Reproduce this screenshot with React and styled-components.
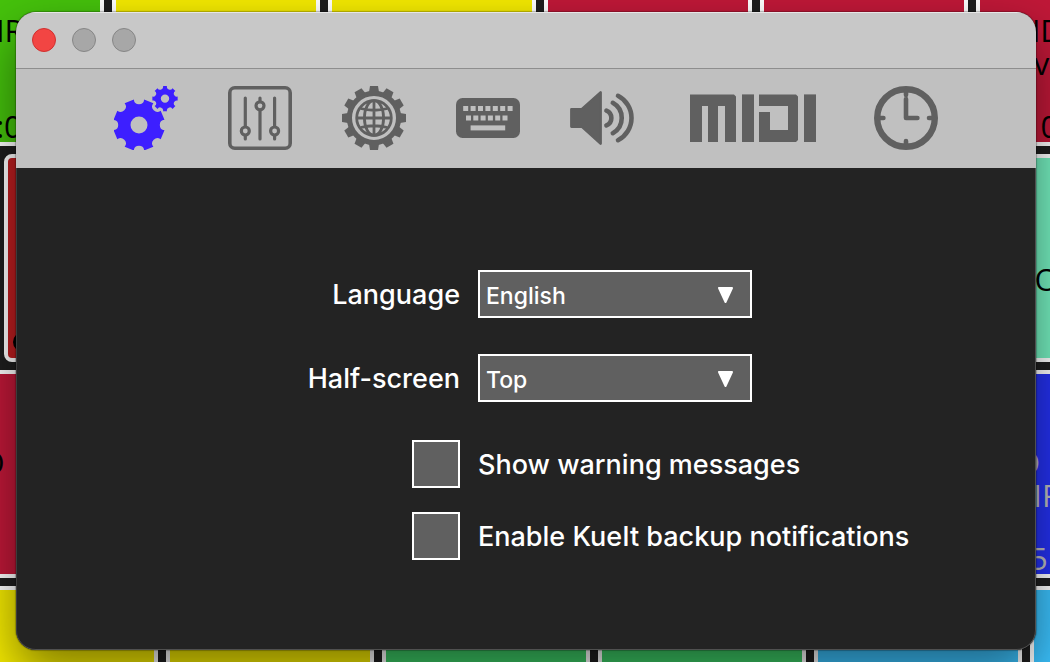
import React, { useState } from "react";
import styled, { createGlobalStyle } from "styled-components";

const GlobalStyle = createGlobalStyle`
  * {
    box-sizing: border-box;
  }
  body {
    margin: 0;
    background-color: #1e1e1e;
    font-family: Inter, "Liberation Sans", sans-serif;
  }
`;

const Desktop = styled.div`
  position: relative;
  display: flex;
  min-height: 100vh;
  padding: 12px 14px 12px 16px;
  overflow: hidden;
`;

const CueBoard = styled.div`
  position: absolute;
  inset: 0;
  display: flex;
  flex-direction: column;
  gap: 8px;
  margin-top: -62px;
  overflow: hidden;
  background-color: #1e1e1e;
`;

const CueRow = styled.div`
  display: flex;
  flex: none;
  gap: 8px;
  margin-left: ${(props) => props.$shift}px;
`;

const Cue = styled.div`
  display: flex;
  flex: none;
  flex-direction: column;
  justify-content: space-between;
  width: 208px;
  height: 208px;
  padding-top: 72px;
  border: 4px solid white;
  border-radius: ${(props) => (props.$selected ? 8 : 0)}px;
  background-color: ${(props) => props.$color};
  color: ${(props) => props.$text || "black"};
  font-family: "Open Sans", "Noto Sans", sans-serif;
  font-size: 31px;
  line-height: 33px;
  text-align: center;
  white-space: pre-line;
`;

const CueTime = styled.div`
  height: 32px;
`;

const CueDot = styled.div`
  width: 20px;
  height: 20px;
  margin: 0 0 6px 5px;
  border-radius: 50%;
  background-color: black;
`;

const Window = styled.main`
  position: relative;
  display: flex;
  flex: 1;
  flex-direction: column;
  overflow: hidden;
  border-radius: 20px;
  background-color: #232323;
  box-shadow: 0 0 1px 1px rgba(0, 0, 0, 0.25), 0 22px 50px rgba(0, 0, 0, 0.48);
`;

const TitleBar = styled.header`
  display: flex;
  align-items: center;
  gap: 16px;
  height: 57px;
  padding: 0 16px;
  border-bottom: 1px solid #8e8e8e;
  background-color: #c8c8c8;
  box-shadow: inset 0 1px 0 #e6e6e6;
`;

const WindowButton = styled.button`
  width: 24px;
  height: 24px;
  padding: 0;
  border: 1px solid ${(props) => (props.$close ? "#d0302f" : "#868686")};
  border-radius: 50%;
  background-color: ${(props) => (props.$close ? "#f24543" : "#a7a7a7")};
`;

const Toolbar = styled.nav`
  display: flex;
  justify-content: center;
  gap: 50px;
  padding: 17px 0 18px;
  background-color: #c0c0c0;
`;

const ToolButton = styled.button`
  display: flex;
  padding: 0 ${(props) => (props.$wide ? 6 : 0)}px;
  border: none;
  background: none;
  color: ${(props) => (props.$active ? "#3d1fff" : "#606060")};
`;

const Panel = styled.form`
  display: flex;
  flex: 1;
  flex-direction: column;
  gap: 38px;
  padding-top: 102px;
  border-radius: 0 0 20px 20px;
  box-shadow: inset 0 -1px 0 #505050, inset 1px 0 0 #3c3c3c, inset -1px 0 0 #505050;
  color: white;
`;

const Group = styled.div`
  display: flex;
  flex-direction: column;
  gap: ${(props) => props.$gap}px;
`;

const Field = styled.div`
  display: grid;
  grid-template-columns: calc(50% - 66px) 1fr;
  column-gap: 18px;
  align-items: center;
`;

const Label = styled.label`
  justify-self: ${(props) => (props.$right ? "end" : "start")};
  padding-top: 2px;
  font-size: 27px;
  font-weight: 500;
  line-height: 46px;
  white-space: nowrap;
`;

const SelectBox = styled.div`
  position: relative;
  width: 274px;
`;

const Select = styled.select`
  display: block;
  width: 100%;
  height: 48px;
  padding: 4px 6px 0;
  border: 2px solid white;
  border-radius: 0;
  outline: none;
  appearance: none;
  background-color: #606060;
  color: white;
  font-family: inherit;
  font-size: 23px;
  font-weight: 500;
`;

const Arrow = styled.svg`
  position: absolute;
  top: 16px;
  right: 18px;
  pointer-events: none;
`;

const Check = styled.input`
  justify-self: end;
  width: 48px;
  height: 48px;
  margin: 0;
  border: 2px solid white;
  appearance: none;
  background-color: #606060;
  &:checked {
    box-shadow: inset 0 0 0 10px #606060;
    background-color: white;
  }
`;

const cueRows = [
  {
    shift: -104,
    cues: [
      { color: "#45c20c", name: "AIR", time: "00:00" },
      { color: "#f4ea00" },
      { color: "#f4ea00" },
      { color: "#c01838" },
      { color: "#c01838" },
      { color: "#c01838", name: "END SCALE\nverses", time: "00:00" },
    ],
  },
  {
    shift: 4,
    cues: [
      { color: "#be1e20", selected: true },
      { color: "#75f0c0" },
      { color: "#75f0c0" },
      { color: "#75f0c0" },
      { color: "#75f0c0", name: "\nBIG BONGO" },
    ],
  },
  {
    shift: -158,
    cues: [
      { color: "#c01838", name: "GUMBO" },
      { color: "#c01838" },
      { color: "#c01838" },
      { color: "#2431f0" },
      { color: "#2431f0" },
      { color: "#2431f0", text: "#bdbdbd", name: "SOLO ME\nHAIR", time: "03:51" },
    ],
  },
  {
    shift: -50,
    cues: [
      { color: "#f4ea00" },
      { color: "#f4ea00" },
      { color: "#3ccb65" },
      { color: "#3ccb65" },
      { color: "#3bc2fd" },
      { color: "#3bc2fd" },
    ],
  },
];

// disc with round notches cut in its rim, the first one at the angle start
const gearPath = (cx, cy, radius, notch, start) => {
  const half = 2 * Math.asin(notch / (2 * radius));
  const point = (angle) => `${cx + radius * Math.cos(angle)} ${cy + radius * Math.sin(angle)}`;
  let d = `M${point(start - half)}`;
  for (let i = 0; i < 8; i++) {
    const angle = start + (i * Math.PI) / 4;
    d += `A${notch} ${notch} 0 0 0 ${point(angle + half)}`;
    d += `L${point(angle + Math.PI / 4 - half)}`;
  }
  return d + "Z";
};

const hole = (cx, cy, r) => `M${cx - r} ${cy}a${r} ${r} 0 1 0 ${2 * r} 0a${r} ${r} 0 1 0 ${-2 * r} 0Z`;

const GearsIcon = () => (
  <svg width="64" height="64" fill="currentColor" fillRule="evenodd">
    <path d={gearPath(25, 39, 26, 5.2, 0) + hole(25, 39, 8.5)} />
    <path d={gearPath(51, 12.6, 12.8, 3, Math.PI / 8) + hole(51, 12.6, 4.2)} />
  </svg>
);

const SlidersIcon = () => (
  <svg width="64" height="64" fill="none" stroke="currentColor" strokeWidth="3.2" strokeLinecap="round">
    <rect x="1.8" y="1.8" width="60.4" height="60.4" rx="5" strokeWidth="3.6" />
    <path d="M17.3 12V40M17.3 50V53M32 12V15M32 25V53M46.6 12V40M46.6 50V53" />
    <circle cx="17.3" cy="45" r="4" />
    <circle cx="32" cy="19.8" r="4" />
    <circle cx="46.6" cy="45" r="4" />
  </svg>
);

const GlobeIcon = () => (
  <svg width="64" height="64" fill="none" stroke="currentColor" strokeWidth="2.8">
    <circle cx="32" cy="32" r="24.6" strokeWidth="5.2" />
    {[...Array(12)].map((_, i) => (
      <path key={i} d="M27 6L28 0H36L37 6Z" fill="currentColor" stroke="none" transform={`rotate(${i * 30} 32 32)`} />
    ))}
    <circle cx="32" cy="32" r="17.3" />
    <ellipse cx="32" cy="32" rx="9.6" ry="17.3" />
    <path d="M32 15V49M15 32H49M18.5 22.5Q32 26 45.5 22.5M18.5 41.5Q32 38 45.5 41.5" />
  </svg>
);

const KeyboardIcon = () => (
  <svg width="64" height="64" fill="#c0c0c0">
    <rect y="12" width="64" height="40" rx="6.5" fill="currentColor" />
    {[...Array(7)].map((_, i) => (
      <rect key={i} x={7.2 + i * 7.4} y="20" width="5" height="5" />
    ))}
    {[...Array(6)].map((_, i) => (
      <rect key={i} x={10 + i * 7.3} y="29.5" width="5" height="5" />
    ))}
    <rect x="14.6" y="39.4" width="34.6" height="5" />
  </svg>
);

const SpeakerIcon = () => (
  <svg width="64" height="64" fill="none" stroke="currentColor" strokeWidth="4.6" strokeLinecap="round">
    <path
      d="M1.4 23.2H11.8L30.6 6.4V57.6L11.8 40.6H1.4Z"
      fill="currentColor"
      strokeWidth="2.6"
      strokeLinejoin="round"
    />
    <path d="M36.4 24.6A8 8 0 0 1 36.4 39.4M42.8 16.8A17.4 17.4 0 0 1 42.8 47.2M48 9.8A25 25 0 0 1 48 54.2" />
  </svg>
);

const MidiIcon = () => (
  <svg width="128" height="64" fill="currentColor">
    <path d="M0 8.4H44L46 10.4V56H35V20H28V56H18V20H12V56H0Z" />
    <rect x="52" y="8.4" width="12" height="47.6" />
    <path d="M69 8.4H106L108 10.4V54L106 56H69V26H80V44H98V20H69Z" />
    <rect x="114" y="8.4" width="12" height="47.6" />
  </svg>
);

const ClockIcon = () => (
  <svg width="64" height="64" fill="none" stroke="currentColor" strokeWidth="4.6" strokeLinecap="round">
    <circle cx="32" cy="32" r="28.8" strokeWidth="6.4" />
    <path d="M32 5V9M5 32H9.4M55 32H59M32 55V59M32 13V32H43.4" strokeLinejoin="round" />
  </svg>
);

const tools = [
  { name: "General", Icon: GearsIcon },
  { name: "Mixer", Icon: SlidersIcon },
  { name: "Network", Icon: GlobeIcon },
  { name: "Keyboard", Icon: KeyboardIcon },
  { name: "Audio", Icon: SpeakerIcon },
  { name: "MIDI", Icon: MidiIcon, wide: true },
  { name: "Time", Icon: ClockIcon },
];

const selects = [
  { id: "language", label: "Language", options: ["English", "Deutsch", "Español"] },
  { id: "half-screen", label: "Half-screen", options: ["Top", "Bottom"] },
];

const checks = [
  { id: "warnings", label: "Show warning messages" },
  { id: "backup", label: "Enable KueIt backup notifications" },
];

function App() {
  const [activeTool, setActiveTool] = useState("General");

  return (
    <Desktop>
      <GlobalStyle />
      <CueBoard aria-hidden="true">
        {cueRows.map((row, index) => (
          <CueRow key={index} $shift={row.shift}>
            {row.cues.map((cue, i) => (
              <Cue key={i} $color={cue.color} $text={cue.text} $selected={cue.selected}>
                <div>{cue.name}</div>
                {cue.selected ? <CueDot /> : <CueTime>{cue.time}</CueTime>}
              </Cue>
            ))}
          </CueRow>
        ))}
      </CueBoard>
      <Window>
        <TitleBar>
          <WindowButton $close aria-label="Close" />
          <WindowButton aria-label="Minimize" />
          <WindowButton aria-label="Zoom" />
        </TitleBar>
        <Toolbar>
          {tools.map(({ name, Icon, wide }) => (
            <ToolButton
              key={name}
              type="button"
              aria-label={name}
              $wide={wide}
              $active={activeTool === name}
              onClick={() => setActiveTool(name)}
            >
              <Icon />
            </ToolButton>
          ))}
        </Toolbar>
        <Panel>
          <Group $gap={36}>
            {selects.map((item) => (
              <Field key={item.id}>
                <Label $right htmlFor={item.id}>{item.label}</Label>
                <SelectBox>
                  <Select id={item.id}>
                    {item.options.map((option) => (
                      <option key={option}>{option}</option>
                    ))}
                  </Select>
                  <Arrow width="17" height="18">
                    <path d="M2 2H15L8.5 16Z" fill="white" stroke="white" strokeWidth="2" strokeLinejoin="round" />
                  </Arrow>
                </SelectBox>
              </Field>
            ))}
          </Group>
          <Group $gap={24}>
            {checks.map((item) => (
              <Field key={item.id}>
                <Check type="checkbox" id={item.id} />
                <Label htmlFor={item.id}>{item.label}</Label>
              </Field>
            ))}
          </Group>
        </Panel>
      </Window>
    </Desktop>
  );
}

export default App;
